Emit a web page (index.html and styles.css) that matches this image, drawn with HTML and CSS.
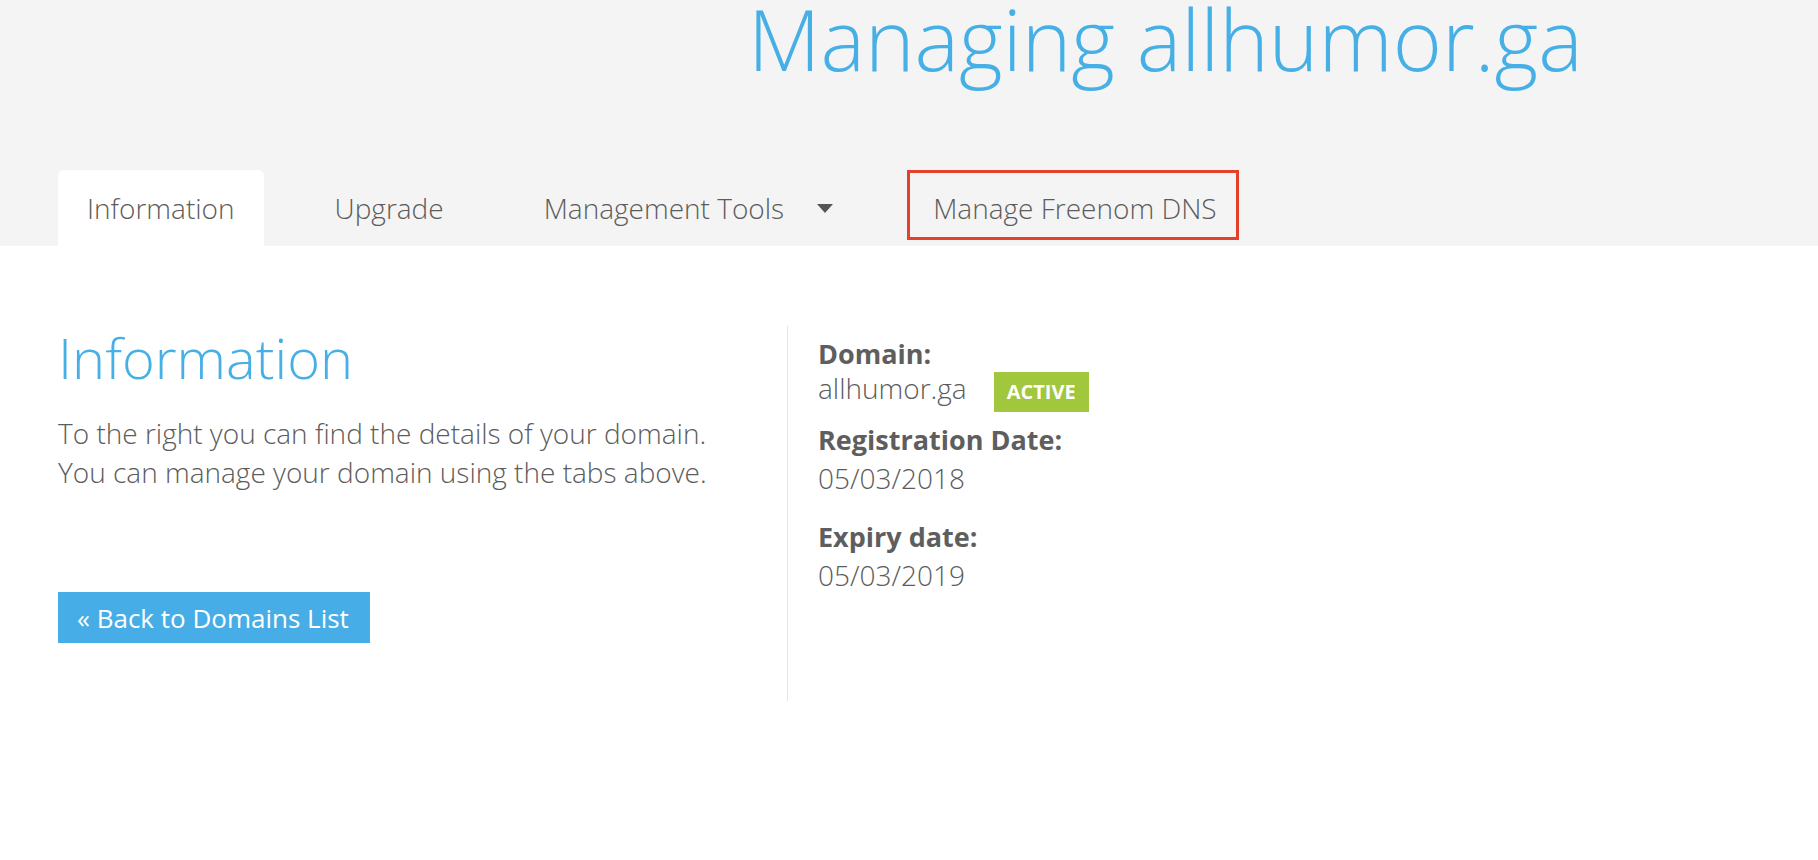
FILE: index.html
```html
<!DOCTYPE html>
<html lang="en">
<head>
<meta charset="utf-8">
<title>Managing allhumor.ga</title>
<link rel="stylesheet" href="styles.css">
</head>
<body>
<header class="header">
  <h1 class="page-title">Managing allhumor.ga</h1>
  <nav class="tabs">
    <a class="tab tab-active">Information</a>
    <a class="tab">Upgrade</a>
    <a class="tab">Management Tools <span class="caret"></span></a>
    <a class="tab tab-marked">Manage Freenom DNS</a>
  </nav>
</header>
<main class="content">
  <section class="intro">
    <h2 class="section-title">Information</h2>
    <p class="intro-text">To the right you can find the details of your domain.<br>You can manage your domain using the tabs above.</p>
    <a class="btn-back">&laquo; Back to Domains List</a>
  </section>
  <section class="details">
    <div class="detail">
      <div class="label label-domain">Domain:</div>
      <div class="value value-domain"><span class="domain-name">allhumor.ga</span><span class="badge">ACTIVE</span></div>
    </div>
    <div class="detail detail-reg">
      <div class="label">Registration Date:</div>
      <div class="value">05/03/2018</div>
    </div>
    <div class="detail detail-exp">
      <div class="label">Expiry date:</div>
      <div class="value">05/03/2019</div>
    </div>
  </section>
</main>
</body>
</html>
```
FILE: styles.css
```css
* { box-sizing: border-box; }
html, body { margin: 0; padding: 0; background: #ffffff; }
body {
  font-family: "Open Sans", "Liberation Sans", sans-serif;
  color: #5c5c5c;
  width: 1818px;
  height: 860px;
  overflow: hidden;
}
.header {
  background: #f4f4f4;
  height: 246px;
  padding-left: 58px;
  display: flex;
  flex-direction: column;
}
.page-title {
  flex: 1;
  margin: 0 0 0 690px;
  font-weight: 300;
  font-size: 84px;
  line-height: 78px;
  color: #46afe6;
  white-space: nowrap;
}
.tabs {
  display: flex;
  gap: 42px;
  height: 76px;
}
.tab {
  display: flex;
  align-items: center;
  padding: 0 29px;
  font-size: 28px;
  font-weight: 300;
  color: #5c5c5c;
  border-radius: 6px 6px 0 0;
  position: relative;
  white-space: nowrap;
}
.tab-active { background: #ffffff; }
.caret {
  display: inline-block;
  width: 0;
  height: 0;
  margin-left: 33px;
  border-left: 8px solid transparent;
  border-right: 8px solid transparent;
  border-top: 9px solid #555555;
}
.tab-marked::after {
  content: "";
  position: absolute;
  left: 3px;
  right: 7px;
  top: 0;
  bottom: 6px;
  border: 3px solid #e5402b;
}
.content {
  display: flex;
  padding: 80px 0 0 58px;
}
.intro {
  width: 729px;
}
.section-title {
  margin: 0;
  font-weight: 300;
  font-size: 56px;
  line-height: 62px;
  color: #46afe6;
}
.intro-text {
  margin: 26px 0 0;
  font-size: 28px;
  font-weight: 300;
  line-height: 39px;
  color: #5c5c5c;
}
.btn-back {
  display: inline-flex;
  align-items: center;
  margin-top: 100px;
  height: 51px;
  width: 312px;
  padding-left: 19px;
  background: #47ade6;
  color: #ffffff;
  font-size: 26px;
  font-weight: 400;
}
.details {
  border-left: 1px solid #e6e6e6;
  height: 375px;
  padding: 11px 0 0 30px;
}
.label {
  font-weight: 700;
  font-size: 27px;
  line-height: 38px;
  color: #5e5e5e;
}
.label-domain { line-height: 34px; }
.value {
  font-size: 28px;
  font-weight: 300;
  line-height: 39px;
  color: #5c5c5c;
}
.value-domain {
  display: flex;
  align-items: flex-start;
  line-height: 34px;
}
.badge {
  display: flex;
  align-items: center;
  justify-content: center;
  width: 95px;
  height: 40px;
  margin: 1px 0 0 27px;
  background: #a1c73c;
  color: #ffffff;
  font-size: 20px;
  font-weight: 700;
  line-height: 1;
}
.detail-reg { margin-top: 9px; }
.detail-exp { margin-top: 20px; }
```
